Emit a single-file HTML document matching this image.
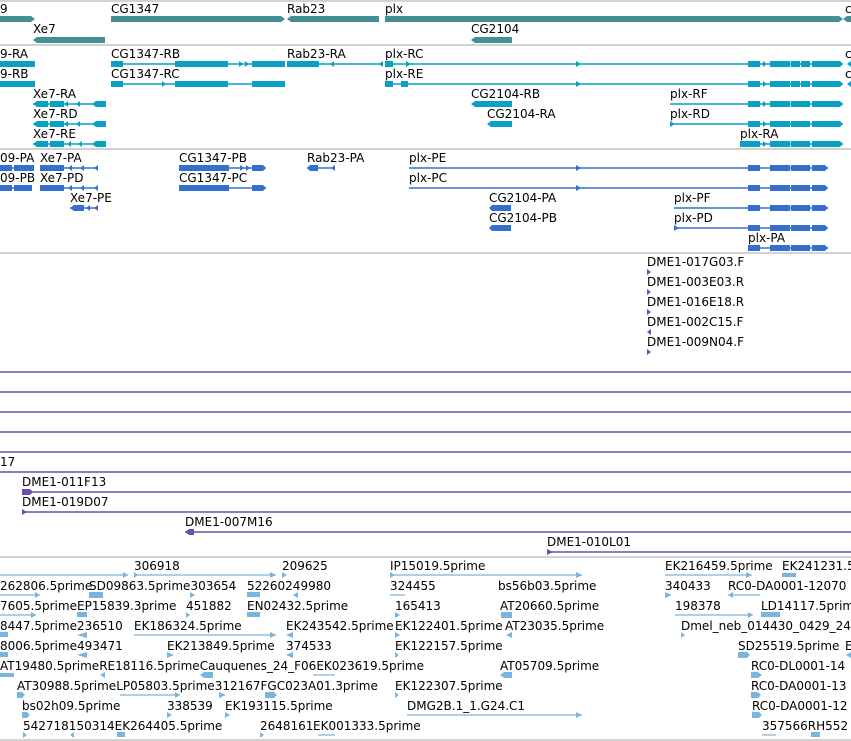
<!DOCTYPE html>
<html><head><meta charset="utf-8"><style>
html,body{margin:0;padding:0;background:#fff;width:851px;height:741px;overflow:hidden}
svg{display:block}
text{font-family:"DejaVu Sans","Liberation Sans",sans-serif;font-size:12px;fill:#000}
.g1 rect,.g1 polygon{fill:#428f94}
.g2 rect,.g2 polygon{fill:#0aa0c4}.g2 line{stroke:#0aa0c4;stroke-width:1.5}
.g3 rect,.g3 polygon{fill:#3570d0}.g3 line{stroke:#3570d0;stroke-width:1.5}
.g4 line{stroke:#6a4eb0;stroke-width:1.5}.g4 polygon{fill:#6a4eb0}
.g5 rect,.g5 polygon{fill:#7ab5dd}.g5 line{stroke:#7ab5dd;stroke-width:1.2}
.sep{stroke:#c4c4c4;stroke-width:1.5}
</style></head><body>
<svg width="851" height="741" viewBox="0 0 851 741">
<line class="sep" x1="0" y1="1" x2="851" y2="1"/>
<line class="sep" x1="0" y1="45" x2="851" y2="45"/>
<line class="sep" x1="0" y1="149" x2="851" y2="149"/>
<line class="sep" x1="0" y1="253" x2="851" y2="253"/>
<line class="sep" x1="0" y1="557" x2="851" y2="557"/>
<line class="sep" x1="0" y1="740" x2="851" y2="740"/>

<!-- Track 1 genes -->
<g class="g1">
<text x="0" y="13">9</text><text x="111" y="13">CG1347</text><text x="287" y="13">Rab23</text><text x="385" y="13">plx</text><text x="845" y="13">c</text>
<polygon points="0,16 31,16 35,19 31,22 0,22"/>
<polygon points="111,16 281,16 285,19 281,22 111,22"/>
<polygon points="291,16 379,16 379,22 291,22 287,19"/>
<polygon points="385,16 839,16 843,19 839,22 385,22"/>
<polygon points="847,16 851,16 851,22 847,22 843,19"/>
<text x="33" y="33">Xe7</text>
<polygon points="37,37 105,37 105,43 37,43 33,40"/>
<text x="471" y="33">CG2104</text>
<polygon points="475,37 512,37 512,43 475,43 471,40"/>
</g>

<!-- Track 2 transcripts -->
<g class="g2">
<text x="0" y="58">9-RA</text><text x="111" y="58">CG1347-RB</text><text x="287" y="58">Rab23-RA</text><text x="385" y="58">plx-RC</text><text x="845" y="58">c</text>
<rect x="0" y="61" width="14" height="6"/><rect x="14" y="61" width="21" height="6"/>
<line x1="111" y1="64" x2="285" y2="64"/><rect x="111" y="61" width="12" height="6"/><rect x="175" y="61" width="53" height="6"/><polygon points="239,61 243,64 239,67"/><polygon points="245,61 249,64 245,67"/><rect x="252" y="61" width="33" height="6"/>
<line x1="287" y1="64" x2="383" y2="64"/><rect x="287" y="61" width="32" height="6"/><polygon points="334,61 330,64 334,67"/><polygon points="383,61 379,64 383,67"/>
<line x1="385" y1="64" x2="843" y2="64"/><rect x="385" y="61" width="8" height="6"/><polygon points="406,61 411,64 406,67"/><polygon points="576,61 581,64 576,67"/>
<rect x="748" y="61" width="12" height="6"/><polygon points="763,61 767,64 763,67"/><rect x="770" y="61" width="20" height="6"/><rect x="791" y="61" width="9" height="6"/><rect x="801" y="61" width="9" height="6"/><polygon points="812,61 840,61 843,64 840,67 812,67"/><polygon points="851,61 847,64 851,67"/>

<text x="0" y="78">9-RB</text><text x="111" y="78">CG1347-RC</text><text x="385" y="78">plx-RE</text><text x="845" y="78">c</text>
<rect x="0" y="81" width="14" height="6"/><rect x="14" y="81" width="21" height="6"/>
<line x1="111" y1="84" x2="285" y2="84"/><rect x="111" y="81" width="12" height="6"/><polygon points="162,81 166,84 162,87"/><rect x="175" y="81" width="53" height="6"/><rect x="252" y="81" width="33" height="6"/>
<line x1="385" y1="84" x2="843" y2="84"/><rect x="385" y="81" width="8" height="6"/><rect x="401" y="81" width="7" height="6"/><polygon points="576,81 581,84 576,87"/>
<rect x="748" y="81" width="12" height="6"/><polygon points="763,81 767,84 763,87"/><rect x="770" y="81" width="20" height="6"/><rect x="791" y="81" width="9" height="6"/><rect x="801" y="81" width="9" height="6"/><polygon points="812,81 840,81 843,84 840,87 812,87"/><polygon points="851,81 847,84 851,87"/>

<text x="33" y="98">Xe7-RA</text><text x="471" y="98">CG2104-RB</text><text x="670" y="98">plx-RF</text>
<polygon points="37,101 48,101 48,107 37,107 33,104"/><rect x="50" y="101" width="14" height="6"/><polygon points="68,101 64,104 68,107"/><polygon points="80,101 76,104 80,107"/><polygon points="96,101 106,101 106,107 96,107 92,104"/><line x1="33" y1="104" x2="106" y2="104"/>
<polygon points="475,101 512,101 512,107 475,107 471,104"/>
<line x1="670" y1="104" x2="843" y2="104"/><rect x="748" y="101" width="12" height="6"/><polygon points="763,101 767,104 763,107"/><rect x="770" y="101" width="20" height="6"/><rect x="791" y="101" width="19" height="6"/><polygon points="812,101 840,101 843,104 840,107 812,107"/>

<text x="33" y="118">Xe7-RD</text><text x="487" y="118">CG2104-RA</text><text x="670" y="118">plx-RD</text>
<polygon points="37,121 48,121 48,127 37,127 33,124"/><rect x="50" y="121" width="14" height="6"/><polygon points="68,121 64,124 68,127"/><polygon points="80,121 76,124 80,127"/><polygon points="96,121 106,121 106,127 96,127 92,124"/><line x1="33" y1="124" x2="106" y2="124"/>
<polygon points="491,121 512,121 512,127 491,127 487,124"/>
<line x1="670" y1="124" x2="843" y2="124"/><polygon points="670,121 675,124 670,127"/><rect x="748" y="121" width="12" height="6"/><polygon points="763,121 767,124 763,127"/><rect x="770" y="121" width="20" height="6"/><rect x="791" y="121" width="19" height="6"/><polygon points="812,121 840,121 843,124 840,127 812,127"/>

<text x="33" y="138">Xe7-RE</text><text x="740" y="138">plx-RA</text>
<polygon points="37,141 48,141 48,147 37,147 33,144"/><rect x="50" y="141" width="14" height="6"/><polygon points="71,141 67,144 71,147"/><polygon points="82,141 78,144 82,147"/><polygon points="96,141 106,141 106,147 96,147 92,144"/><line x1="33" y1="144" x2="106" y2="144"/>
<line x1="740" y1="144" x2="843" y2="144"/><rect x="740" y="141" width="20" height="6"/><polygon points="763,141 767,144 763,147"/><rect x="770" y="141" width="20" height="6"/><rect x="791" y="141" width="19" height="6"/><polygon points="812,141 840,141 843,144 840,147 812,147"/>
</g>

<!-- Track 3 proteins -->
<g class="g3">
<text x="0" y="162">09-PA</text><text x="40" y="162">Xe7-PA</text><text x="179" y="162">CG1347-PB</text><text x="307" y="162">Rab23-PA</text><text x="409" y="162">plx-PE</text>
<line x1="0" y1="168" x2="34" y2="168"/><rect x="0" y="165" width="12" height="6"/><rect x="14" y="165" width="20" height="6"/>
<line x1="40" y1="168" x2="98" y2="168"/><rect x="40" y="165" width="24" height="6"/><polygon points="72,165 68,168 72,171"/><polygon points="84,165 80,168 84,171"/><polygon points="98,165 94,168 98,171"/>
<line x1="179" y1="168" x2="266" y2="168"/><rect x="179" y="165" width="50" height="6"/><polygon points="240,165 244,168 240,171"/><polygon points="246,165 250,168 246,171"/><polygon points="252,165 263,165 266,168 263,171 252,171"/>
<line x1="307" y1="168" x2="335" y2="168"/><polygon points="310,165 318,165 318,171 310,171 307,168"/><polygon points="335,165 331,168 335,171"/>
<line x1="409" y1="168" x2="828" y2="168"/><polygon points="576,165 581,168 576,171"/><rect x="748" y="165" width="12" height="6"/><rect x="770" y="165" width="20" height="6"/><rect x="791" y="165" width="19" height="6"/><polygon points="812,165 825,165 828,168 825,171 812,171"/>

<text x="0" y="182">09-PB</text><text x="40" y="182">Xe7-PD</text><text x="179" y="182">CG1347-PC</text><text x="409" y="182">plx-PC</text>
<line x1="0" y1="188" x2="32" y2="188"/><rect x="0" y="185" width="12" height="6"/><rect x="14" y="185" width="18" height="6"/>
<line x1="40" y1="188" x2="98" y2="188"/><rect x="40" y="185" width="24" height="6"/><polygon points="72,185 68,188 72,191"/><polygon points="84,185 80,188 84,191"/><polygon points="98,185 94,188 98,191"/>
<line x1="179" y1="188" x2="266" y2="188"/><rect x="179" y="185" width="50" height="6"/><polygon points="252,185 263,185 266,188 263,191 252,191"/>
<line x1="409" y1="188" x2="828" y2="188"/><polygon points="576,185 581,188 576,191"/><rect x="748" y="185" width="12" height="6"/><rect x="770" y="185" width="20" height="6"/><rect x="791" y="185" width="19" height="6"/><polygon points="812,185 825,185 828,188 825,191 812,191"/>

<text x="70" y="202">Xe7-PE</text><text x="489" y="202">CG2104-PA</text><text x="674" y="202">plx-PF</text>
<line x1="70" y1="208" x2="98" y2="208"/><polygon points="74,205 84,205 84,211 74,211 70,208"/><polygon points="90,205 86,208 90,211"/><polygon points="98,205 94,208 98,211"/>
<polygon points="492,205 511,205 511,211 492,211 489,208"/>
<line x1="674" y1="208" x2="828" y2="208"/><rect x="748" y="205" width="12" height="6"/><rect x="770" y="205" width="20" height="6"/><rect x="791" y="205" width="19" height="6"/><polygon points="812,205 825,205 828,208 825,211 812,211"/>

<text x="489" y="222">CG2104-PB</text><text x="674" y="222">plx-PD</text>
<polygon points="492,225 511,225 511,231 492,231 489,228"/>
<line x1="674" y1="228" x2="828" y2="228"/><polygon points="674,225 679,228 674,231"/><rect x="748" y="225" width="12" height="6"/><rect x="770" y="225" width="20" height="6"/><rect x="791" y="225" width="19" height="6"/><polygon points="812,225 825,225 828,228 825,231 812,231"/>

<text x="748" y="242">plx-PA</text>
<line x1="748" y1="248" x2="828" y2="248"/><rect x="748" y="245" width="12" height="6"/><rect x="770" y="245" width="20" height="6"/><rect x="791" y="245" width="19" height="6"/><polygon points="812,245 825,245 828,248 825,251 812,251"/>
</g>

<!-- Track 4 purple -->
<g class="g4">
<text x="647" y="266">DME1-017G03.F</text><polygon points="647,269 651,272 647,275"/>
<text x="647" y="286">DME1-003E03.R</text><polygon points="647,289 651,292 647,295"/>
<text x="647" y="306">DME1-016E18.R</text><polygon points="647,309 651,312 647,315"/>
<text x="647" y="326">DME1-002C15.F</text><polygon points="651,329 647,332 651,335"/>
<text x="647" y="346">DME1-009N04.F</text><polygon points="647,349 651,352 647,355"/>
<line x1="0" y1="372" x2="851" y2="372"/>
<line x1="0" y1="392" x2="851" y2="392"/>
<line x1="0" y1="412" x2="851" y2="412"/>
<line x1="0" y1="432" x2="851" y2="432"/>
<line x1="0" y1="452" x2="851" y2="452"/>
<text x="0" y="466">17</text>
<line x1="0" y1="472" x2="851" y2="472"/>
<text x="22" y="486">DME1-011F13</text>
<line x1="22" y1="492" x2="851" y2="492"/><polygon points="22,489 30,489 33,492 30,495 22,495"/>
<text x="22" y="506">DME1-019D07</text>
<line x1="22" y1="512" x2="851" y2="512"/><polygon points="22,509 27,512 22,515"/>
<text x="185" y="526">DME1-007M16</text>
<line x1="185" y1="532" x2="851" y2="532"/><polygon points="189,529 194,529 194,535 189,535 185,532"/>
<text x="547" y="546">DME1-010L01</text>
<line x1="547" y1="552" x2="851" y2="552"/><polygon points="547,549 553,552 547,555"/>
</g>

<!-- Track 5 ESTs -->
<g class="g5">
<text x="134" y="570">306918</text><text x="282" y="570">209625</text><text x="390" y="570">IP15019.5prime</text><text x="665" y="570">EK216459.5prime</text><text x="782" y="570">EK241231.5</text>
<line x1="0" y1="575" x2="128" y2="575"/><polygon points="123,572 128,575 123,578"/>
<line x1="134" y1="575" x2="276" y2="575"/><polygon points="134,572 138,575 134,578"/><polygon points="270,572 276,575 270,578"/>
<polygon points="282,572 287,575 282,578"/>
<line x1="390" y1="575" x2="582" y2="575"/><polygon points="390,572 395,575 390,578"/><polygon points="576,572 582,575 576,578"/>
<line x1="665" y1="575" x2="752" y2="575"/><polygon points="746,572 752,575 746,578"/>
<rect x="782" y="573" width="14" height="4"/>

<text x="0" y="590">262806.5prime</text><text x="89" y="590">SD09863.5prime303654</text><text x="247" y="590">52260249980</text><text x="390" y="590">324455</text><text x="498" y="590">bs56b03.5prime</text><text x="665" y="590">340433</text><text x="728" y="590">RC0-DA0001-12070</text>
<line x1="0" y1="595" x2="40" y2="595"/><polygon points="35,592 40,595 35,598"/>
<rect x="89" y="592" width="14" height="6"/><polygon points="190,592 195,595 190,598"/><rect x="247" y="592" width="13" height="5"/><polygon points="298,592 293,595 298,598"/>
<line x1="390" y1="595" x2="405" y2="595"/><polygon points="665,592 672,595 665,598"/>
<line x1="728" y1="595" x2="760" y2="595"/><polygon points="733,592 728,595 733,598"/>

<text x="0" y="610">7605.5prime</text><text x="77" y="610">EP15839.3prime</text><text x="186" y="610">451882</text><text x="247" y="610">EN02432.5prime</text><text x="395" y="610">165413</text><text x="500" y="610">AT20660.5prime</text><text x="675" y="610">198378</text><text x="761" y="610">LD14117.5prime</text>
<line x1="0" y1="615" x2="36" y2="615"/><polygon points="31,612 36,615 31,618"/>
<rect x="77" y="612" width="10" height="5"/><polygon points="186,612 190,615 186,618"/><rect x="247" y="612" width="13" height="5"/><polygon points="395,612 400,615 395,618"/>
<rect x="501" y="612" width="11" height="6"/>
<line x1="675" y1="615" x2="753" y2="615"/><polygon points="748,612 753,615 748,618"/><rect x="761" y="612" width="19" height="5"/>

<text x="0" y="630">8447.5prime</text><text x="77" y="630">236510</text><text x="134" y="630">EK186324.5prime</text><text x="286" y="630">EK243542.5prime</text><text x="395" y="630">EK122401.5prime</text><text x="505" y="630">AT23035.5prime</text><text x="681" y="630">Dmel_neb_014430_0429_24</text>
<rect x="0" y="632" width="8" height="5"/><polygon points="87,632 77,635 87,638"/>
<line x1="134" y1="635" x2="276" y2="635"/><polygon points="270,632 276,635 270,638"/>
<polygon points="293,632 286,635 293,638"/><polygon points="395,632 400,635 395,638"/><polygon points="512,632 506,635 512,638"/><polygon points="681,632 685,635 681,638"/>

<text x="0" y="650">8006.5prime</text><text x="77" y="650">493471</text><text x="167" y="650">EK213849.5prime</text><text x="286" y="650">374533</text><text x="395" y="650">EK122157.5prime</text><text x="738" y="650">SD25519.5prime</text><text x="845" y="650">E</text>
<rect x="0" y="652" width="8" height="5"/><polygon points="87,652 77,655 87,658"/><polygon points="167,652 174,655 167,658"/><polygon points="293,652 286,655 293,658"/><polygon points="395,652 399,655 395,658"/>
<polygon points="738,652 747,652 750,655 747,658 738,658"/><polygon points="851,652 846,655 851,658"/>

<text x="0" y="670">AT19480.5primeRE18116.5primeCauquenes_24_F06EK023619.5prime</text><text x="500" y="670">AT05709.5prime</text><text x="751" y="670">RC0-DL0001-14</text>
<rect x="0" y="673" width="14" height="4"/><polygon points="105,672 100,675 105,678"/><polygon points="204,672 213,672 213,678 204,678 200,675"/>
<line x1="313" y1="675" x2="335" y2="675"/><polygon points="504,672 512,672 512,678 504,678 500,675"/><polygon points="751,672 758,672 762,675 758,678 751,678"/>

<text x="17" y="690">AT30988.5primeLP05803.5prime312167FGC023A01.3prime</text><text x="395" y="690">EK122307.5prime</text><text x="751" y="690">RC0-DA0001-13</text>
<polygon points="17,692 22,692 25,695 22,698 17,698"/>
<line x1="120" y1="695" x2="180" y2="695"/><polygon points="175,692 180,695 175,698"/>
<polygon points="219,692 226,695 219,698"/><polygon points="265,692 274,692 277,695 274,698 265,698"/>
<polygon points="395,692 399,695 395,698"/><polygon points="751,692 758,692 761,695 758,698 751,698"/>

<text x="22" y="710">bs02h09.5prime</text><text x="167" y="710">338539</text><text x="225" y="710">EK193115.5prime</text><text x="407" y="710">DMG2B.1_1.G24.C1</text><text x="752" y="710">RC0-DA0001-12</text>
<polygon points="22,712 27,712 30,715 27,718 22,718"/><polygon points="167,712 172,715 167,718"/><polygon points="225,712 230,715 225,718"/>
<line x1="407" y1="715" x2="582" y2="715"/><polygon points="576,712 582,715 576,718"/><polygon points="752,712 759,712 762,715 759,718 752,718"/>

<text x="23" y="730">542718150314EK264405.5prime</text><text x="260" y="730">2648161</text><text x="313" y="730">EK001333.5prime</text><text x="762" y="730">357566RH552</text>
<polygon points="23,732 27,735 23,738"/><polygon points="74,732 70,735 74,738"/><rect x="117" y="732" width="8" height="5"/><polygon points="260,732 264,735 260,738"/>
<line x1="318" y1="735" x2="335" y2="735"/><line x1="762" y1="735" x2="776" y2="735"/><rect x="811" y="732" width="9" height="5"/>
</g>
</svg>
</body></html>
